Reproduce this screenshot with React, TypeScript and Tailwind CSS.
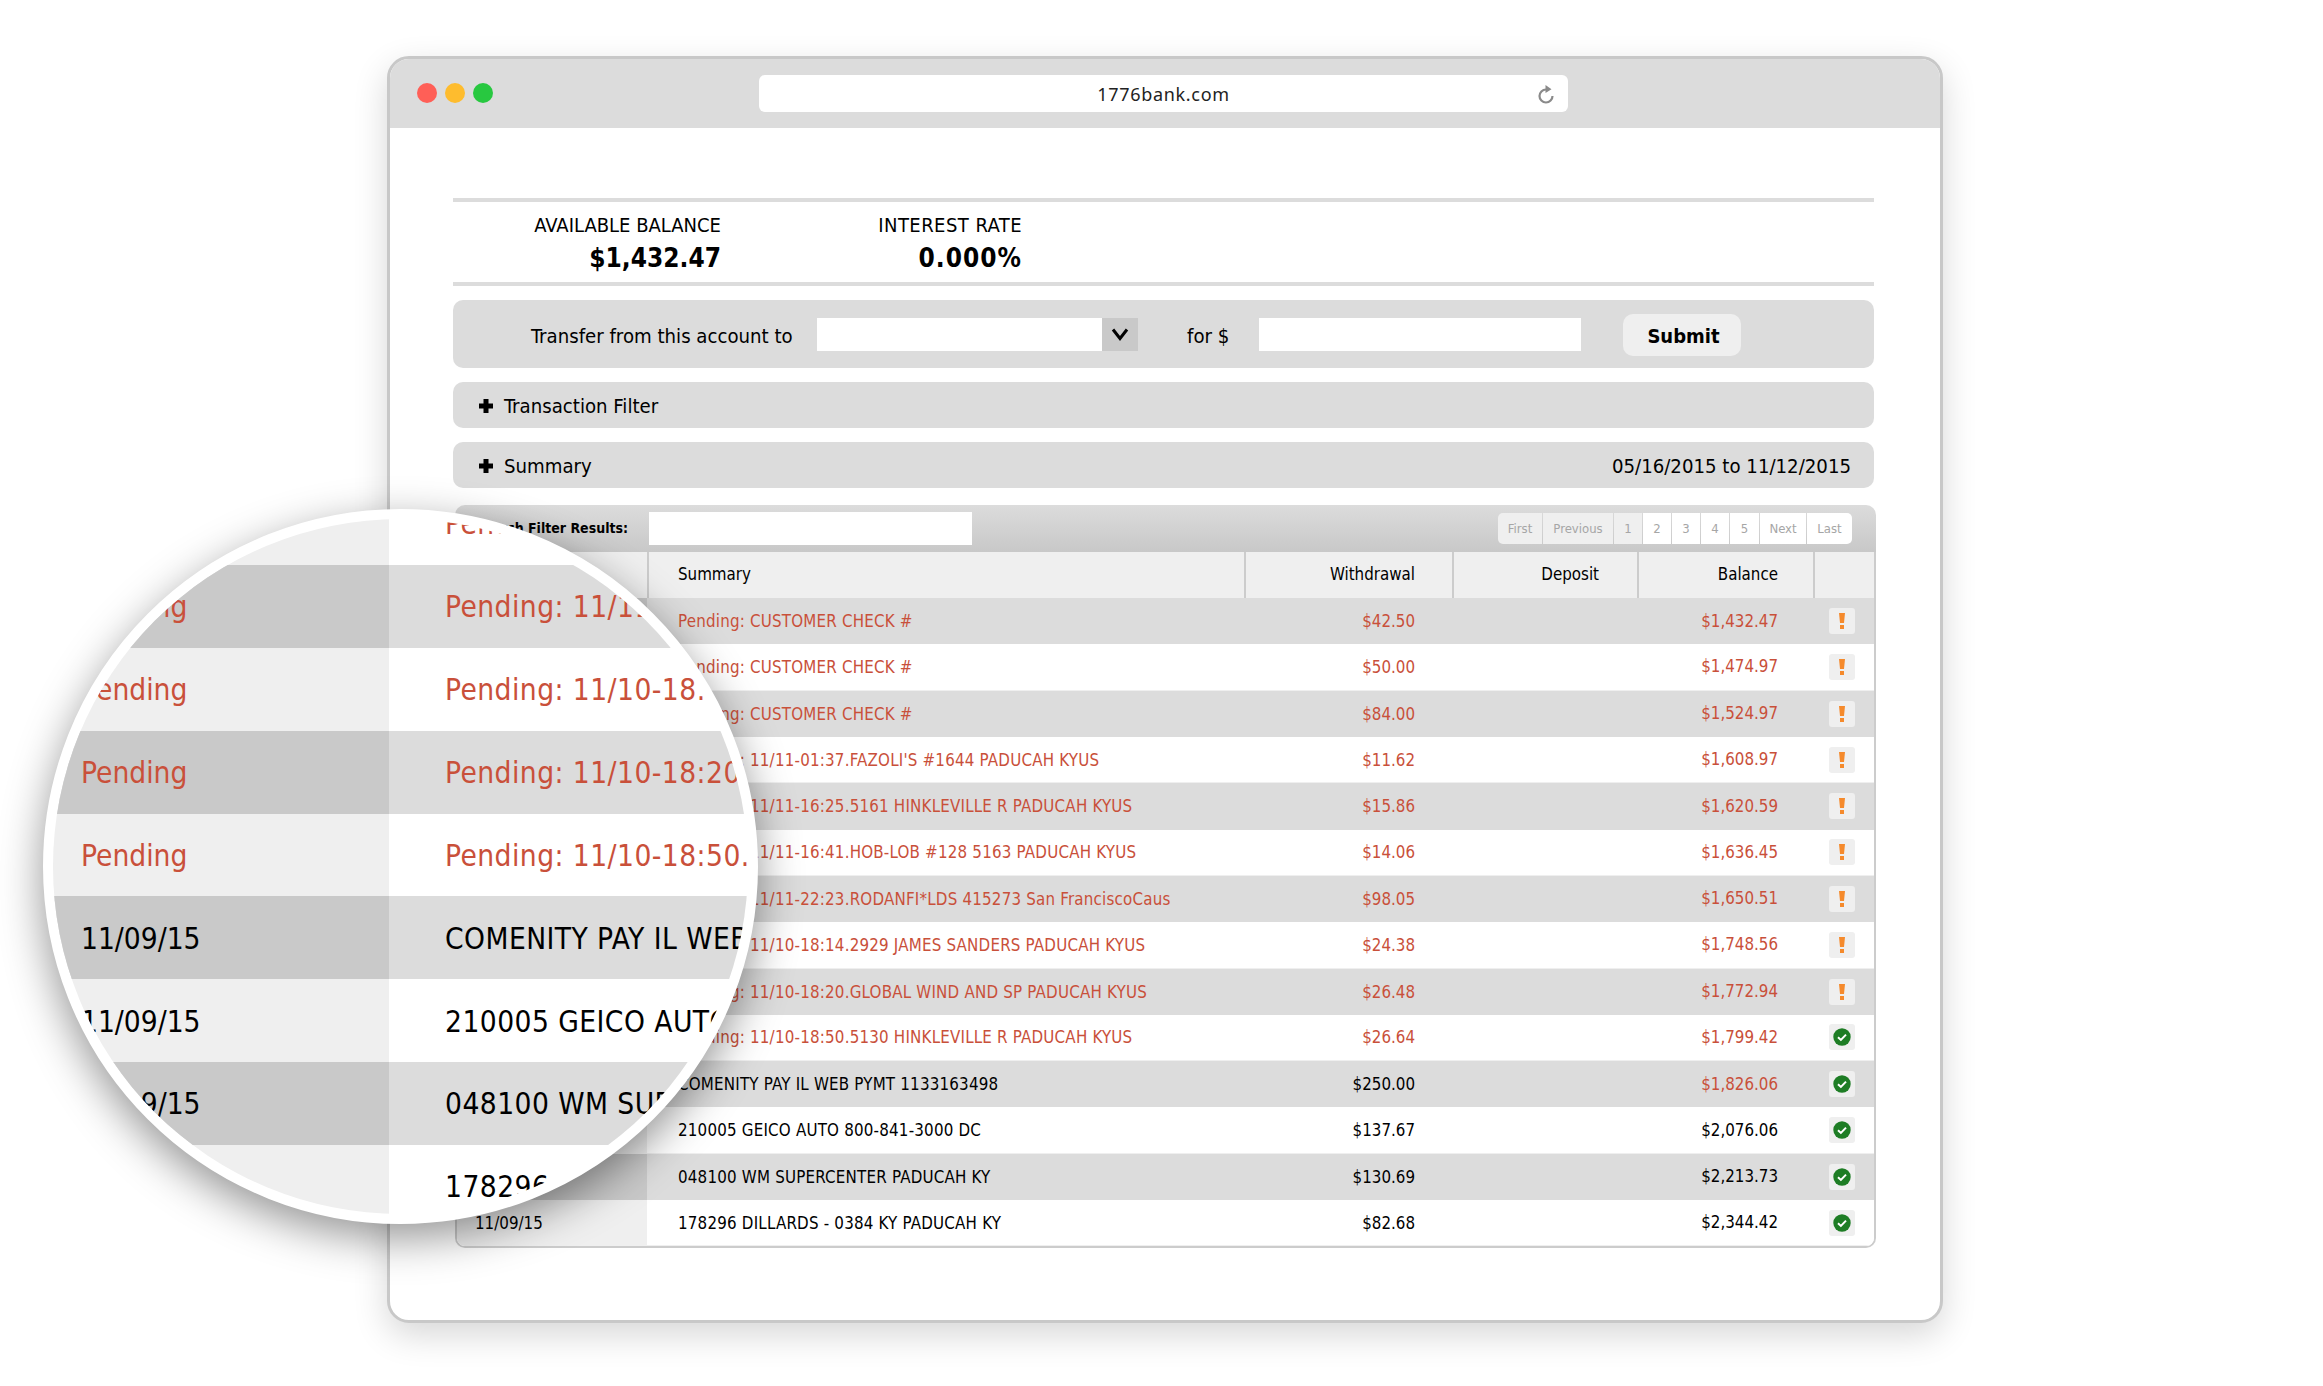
const R = "text-[#c9503a]";
const rows = [
  ["Pending", "Pending: CUSTOMER CHECK #", "$42.50", "$1,432.47", 1, 1, 0],
  ["Pending", "Pending: CUSTOMER CHECK #", "$50.00", "$1,474.97", 1, 1, 0],
  ["Pending", "Pending: CUSTOMER CHECK #", "$84.00", "$1,524.97", 1, 1, 0],
  ["Pending", "Pending: 11/11-01:37.FAZOLI'S #1644 PADUCAH KYUS", "$11.62", "$1,608.97", 1, 1, 0],
  ["Pending", "Pending: 11/11-16:25.5161 HINKLEVILLE R PADUCAH KYUS", "$15.86", "$1,620.59", 1, 1, 0],
  ["Pending", "Pending: 11/11-16:41.HOB-LOB #128 5163 PADUCAH KYUS", "$14.06", "$1,636.45", 1, 1, 0],
  ["Pending", "Pending: 11/11-22:23.RODANFI*LDS 415273 San FranciscoCaus", "$98.05", "$1,650.51", 1, 1, 0],
  ["Pending", "Pending: 11/10-18:14.2929 JAMES SANDERS PADUCAH KYUS", "$24.38", "$1,748.56", 1, 1, 0],
  ["Pending", "Pending: 11/10-18:20.GLOBAL WIND AND SP PADUCAH KYUS", "$26.48", "$1,772.94", 1, 1, 0],
  ["Pending", "Pending: 11/10-18:50.5130 HINKLEVILLE R PADUCAH KYUS", "$26.64", "$1,799.42", 1, 1, 1],
  ["11/09/15", "COMENITY PAY IL WEB PYMT 1133163498", "$250.00", "$1,826.06", 0, 1, 1],
  ["11/09/15", "210005 GEICO AUTO 800-841-3000 DC", "$137.67", "$2,076.06", 0, 0, 1],
  ["11/09/15", "048100 WM SUPERCENTER PADUCAH KY", "$130.69", "$2,213.73", 0, 0, 1],
  ["11/09/15", "178296 DILLARDS - 0384 KY PADUCAH KY", "$82.68", "$2,344.42", 0, 0, 1],
] as const;

const pages = [
  ["First", "w-[44px]", 1], ["Previous", "w-[70px]", 1], ["1", "w-[28px]", 1], ["2", "w-[28px]", 0], ["3", "w-[28px]", 0],
  ["4", "w-[28px]", 0], ["5", "w-[29px]", 0], ["Next", "w-[46px]", 0], ["Last", "w-[45px]", 0],
] as const;

const lens = [
  ["", "Pending: 11/11-16:41.HOB-LOB #128", 1],
  ["Pending", "Pending: 11/11-22:23.RODANFI", 1],
  ["Pending", "Pending: 11/10-18:14.2929 JAMES", 1],
  ["Pending", "Pending: 11/10-18:20.GLOBAL WIND", 1],
  ["Pending", "Pending: 11/10-18:50.5130 HINKLEVILLE", 1],
  ["11/09/15", "COMENITY PAY IL WEB PYMT", 0],
  ["11/09/15", "210005 GEICO AUTO 800-841", 0],
  ["11/09/15", "048100 WM SUPERCENTER", 0],
  ["", "178296 DILLARDS - 0384", 0],
] as const;

function Plus() {
  return (
    <svg width="16" height="16" viewBox="0 0 16 16" className="shrink-0">
      <path d="M5.5 1h5v4.5H15v5h-4.5V15h-5v-4.5H1v-5h4.5z" fill="#000" />
    </svg>
  );
}

function Warn() {
  return (
    <svg width="10" height="16" viewBox="0 0 10 16">
      <path d="M2 0h6L7 10H3z M3 12h4v4H3z" fill="#f58a2c" />
    </svg>
  );
}

function Ok() {
  return (
    <svg width="18" height="18" viewBox="0 0 18 18">
      <circle cx="9" cy="9" r="8.7" fill="#1e7d25" />
      <path d="M5 9.2 7.9 11.9 13 6.6" fill="none" stroke="#fff" strokeWidth="2" />
    </svg>
  );
}

function Reload() {
  return (
    <svg width="16" height="20" viewBox="0 0 16 20">
      <path d="M8 5.5A6.5 6.5 0 1 0 14.5 12" fill="none" stroke="#8a8a8a" strokeWidth="2.2" />
      <path d="M7.5 1 13.5 5.3 7.5 9z" fill="#8a8a8a" />
    </svg>
  );
}

const cols = "grid grid-cols-[190px_597px_208px_185px_176px_1fr] items-stretch text-[16.8px]";

export default function App() {
  return (
    <div className="relative w-[2323px] h-[1386px] bg-white overflow-hidden pl-[387px] pt-[56px] text-black font-['DejaVu_Sans_Condensed','DejaVu_Sans',sans-serif] [font-stretch:condensed]">
      <div className="w-[1556px] h-[1267px] rounded-[22px] border-[3px] border-[#c8c8c8] bg-white shadow-[0_12px_34px_rgba(0,0,0,0.16)] overflow-hidden">
        <div className="relative h-[69px] bg-[#dcdcdc] flex items-center">
          <div className="absolute left-[27px] top-[24px] flex gap-[8px]">
            <span className="w-[20px] h-[20px] rounded-full bg-[#ff5f57]" />
            <span className="w-[20px] h-[20px] rounded-full bg-[#febc2e]" />
            <span className="w-[20px] h-[20px] rounded-full bg-[#28c840]" />
          </div>
          <div className="relative ml-[369px] w-[809px] h-[37px] rounded-[6px] bg-white flex items-center justify-center text-[18px] tracking-[0.7px] text-[#222] font-['Noto_Sans',sans-serif] [font-stretch:normal]">
            <span className="mt-[2px]">1776bank.com</span>
            <span className="absolute right-[14px] top-[9px] flex"><Reload /></span>
          </div>
        </div>

        <div className="pl-[63px] pr-[66px] pt-[70px]">
          <div className="h-[88px] border-y-4 border-[#dcdcdc] flex items-start text-right">
            <div className="w-[268px] pt-[11px]">
              <div className="text-[20px] leading-[24px]">AVAILABLE BALANCE</div>
              <div className="mt-[3px] text-[26px] leading-[36px] font-bold">$1,432.47</div>
            </div>
            <div className="w-[301px] pt-[11px]">
              <div className="text-[20px] leading-[24px] tracking-[0.45px]">INTEREST RATE</div>
              <div className="mt-[3px] text-[26px] leading-[36px] font-bold tracking-[1px]">0.000%</div>
            </div>
          </div>

          <div className="mt-[14px] h-[68px] rounded-[10px] bg-[#dcdcdc] flex items-center pl-[78px] text-[20.2px]">
            <span className="w-[286px] mt-[4px] whitespace-nowrap">Transfer from this account to</span>
            <div className="w-[321px] h-[33px] flex bg-white">
              <div className="flex-1" />
              <div className="w-[36px] bg-[#c9c9c9] flex items-center justify-center">
                <svg width="18" height="14" viewBox="0 0 18 14"><path d="M2 2.5 9 11.5 16 2.5" fill="none" stroke="#000" strokeWidth="3" /></svg>
              </div>
            </div>
            <span className="ml-[49px] w-[72px] mt-[4px]">for $</span>
            <div className="w-[322px] h-[33px] bg-white" />
            <button className="ml-[42px] w-[118px] h-[42px] mt-[2px] pl-[3px] pt-[1px] rounded-[10px] bg-[#efefef] font-bold text-[20px]">Submit</button>
          </div>

          <div className="mt-[14px] h-[46px] rounded-[10px] bg-[#dcdcdc] flex items-center pl-[25px] pt-[2px] gap-[10px] text-[20.2px]">
            <Plus />
            <span className="mt-[1px]">Transaction Filter</span>
          </div>

          <div className="mt-[14px] h-[46px] rounded-[10px] bg-[#dcdcdc] flex items-center justify-between pl-[25px] pr-[23px] pt-[2px] text-[20.2px]">
            <div className="flex items-center gap-[10px]"><Plus /><span className="mt-[1px]">Summary</span></div>
            <span className="mt-[1px]">05/16/2015 to 11/12/2015</span>
          </div>

          <div className="mt-[17px] ml-[2px] mr-[-2px]">
            <div className="h-[47px] rounded-t-[10px] bg-gradient-to-b from-[#dcdcdc] to-[#c8c8c8] flex items-center pl-[8px] pr-[24px]">
              <span className="w-[165px] text-right text-[14px] font-bold whitespace-nowrap">Search Filter Results:</span>
              <div className="ml-[21px] w-[323px] h-[33px] bg-white" />
              <div className="ml-auto flex gap-[1px] rounded-[5px] overflow-hidden">
                {pages.map(([t, w, on]) => (
                  <span key={t} className={`${w} h-[31px] flex items-center justify-center text-[13px] text-[#a6a6a6] ${on ? "bg-[#efefef]" : "bg-white"}`}>{t}</span>
                ))}
              </div>
            </div>

            <div className="border-x-2 border-b-2 border-[#cccccc] rounded-b-[10px] overflow-hidden">
              <div className={`h-[46px] bg-[#efefef] ${cols}`}>
                <div />
                <div className="border-l-2 border-[#cccccc] pl-[29px] flex items-center">Summary</div>
                <div className="border-l-2 border-[#cccccc] pr-[37px] flex items-center justify-end">Withdrawal</div>
                <div className="border-l-2 border-[#cccccc] pr-[38px] flex items-center justify-end">Deposit</div>
                <div className="border-l-2 border-[#cccccc] pr-[35px] flex items-center justify-end">Balance</div>
                <div className="border-l-2 border-[#cccccc]" />
              </div>
              <div className="h-[648px] overflow-hidden">
                {rows.map(([date, sum, wd, bal, redText, redBal, ok], i) => {
                  const dark = i % 2 === 0;
                  return (
                    <div key={i} className={`h-[46.32px] ${cols} ${dark ? "bg-[#dcdcdc]" : "bg-white border-b border-[#efefef]"}`}>
                      <div className={`pl-[18px] pt-[1px] flex items-center ${dark ? "bg-[#c9c9c9]" : "bg-[#efefef]"} ${redText ? R : ""}`}>{date}</div>
                      <div className={`pl-[31px] pt-[1px] flex items-center whitespace-nowrap tracking-[0.2px] ${redText ? R : ""}`}>{sum}</div>
                      <div className={`pr-[37px] pt-[1px] flex items-center justify-end ${redText ? R : ""}`}>{wd}</div>
                      <div />
                      <div className={`pr-[35px] flex items-center justify-end ${redBal ? R : ""}`}>{bal}</div>
                      <div className="flex items-center pl-[16px]">
                        <span className="w-[26px] h-[26px] rounded-[3px] bg-[#efefef] flex items-center justify-center">{ok ? <Ok /> : <Warn />}</span>
                      </div>
                    </div>
                  );
                })}
              </div>
            </div>
          </div>
        </div>
      </div>

      <div className="absolute left-[43px] top-[509px] w-[715px] h-[715px] rounded-full border-[10px] border-white bg-white overflow-hidden shadow-[0_14px_44px_rgba(0,0,0,0.42)]">
        <div className="mt-[-37px]">
          {lens.map(([l, r, red], i) => {
            const dark = i % 2 === 1;
            return (
              <div key={i} className={`h-[82.9px] flex items-center text-[29.6px] whitespace-nowrap ${red ? R : "text-black"} ${dark ? "bg-[#dcdcdc]" : "bg-white"}`}>
                <div className={`w-[336px] h-full shrink-0 pl-[28px] pt-[2px] flex items-center ${dark ? "bg-[#c9c9c9]" : "bg-[#efefef]"}`}>{l}</div>
                <div className="pl-[56px] pt-[2px] tracking-[0.45px]">{r}</div>
              </div>
            );
          })}
        </div>
      </div>
    </div>
  );
}
